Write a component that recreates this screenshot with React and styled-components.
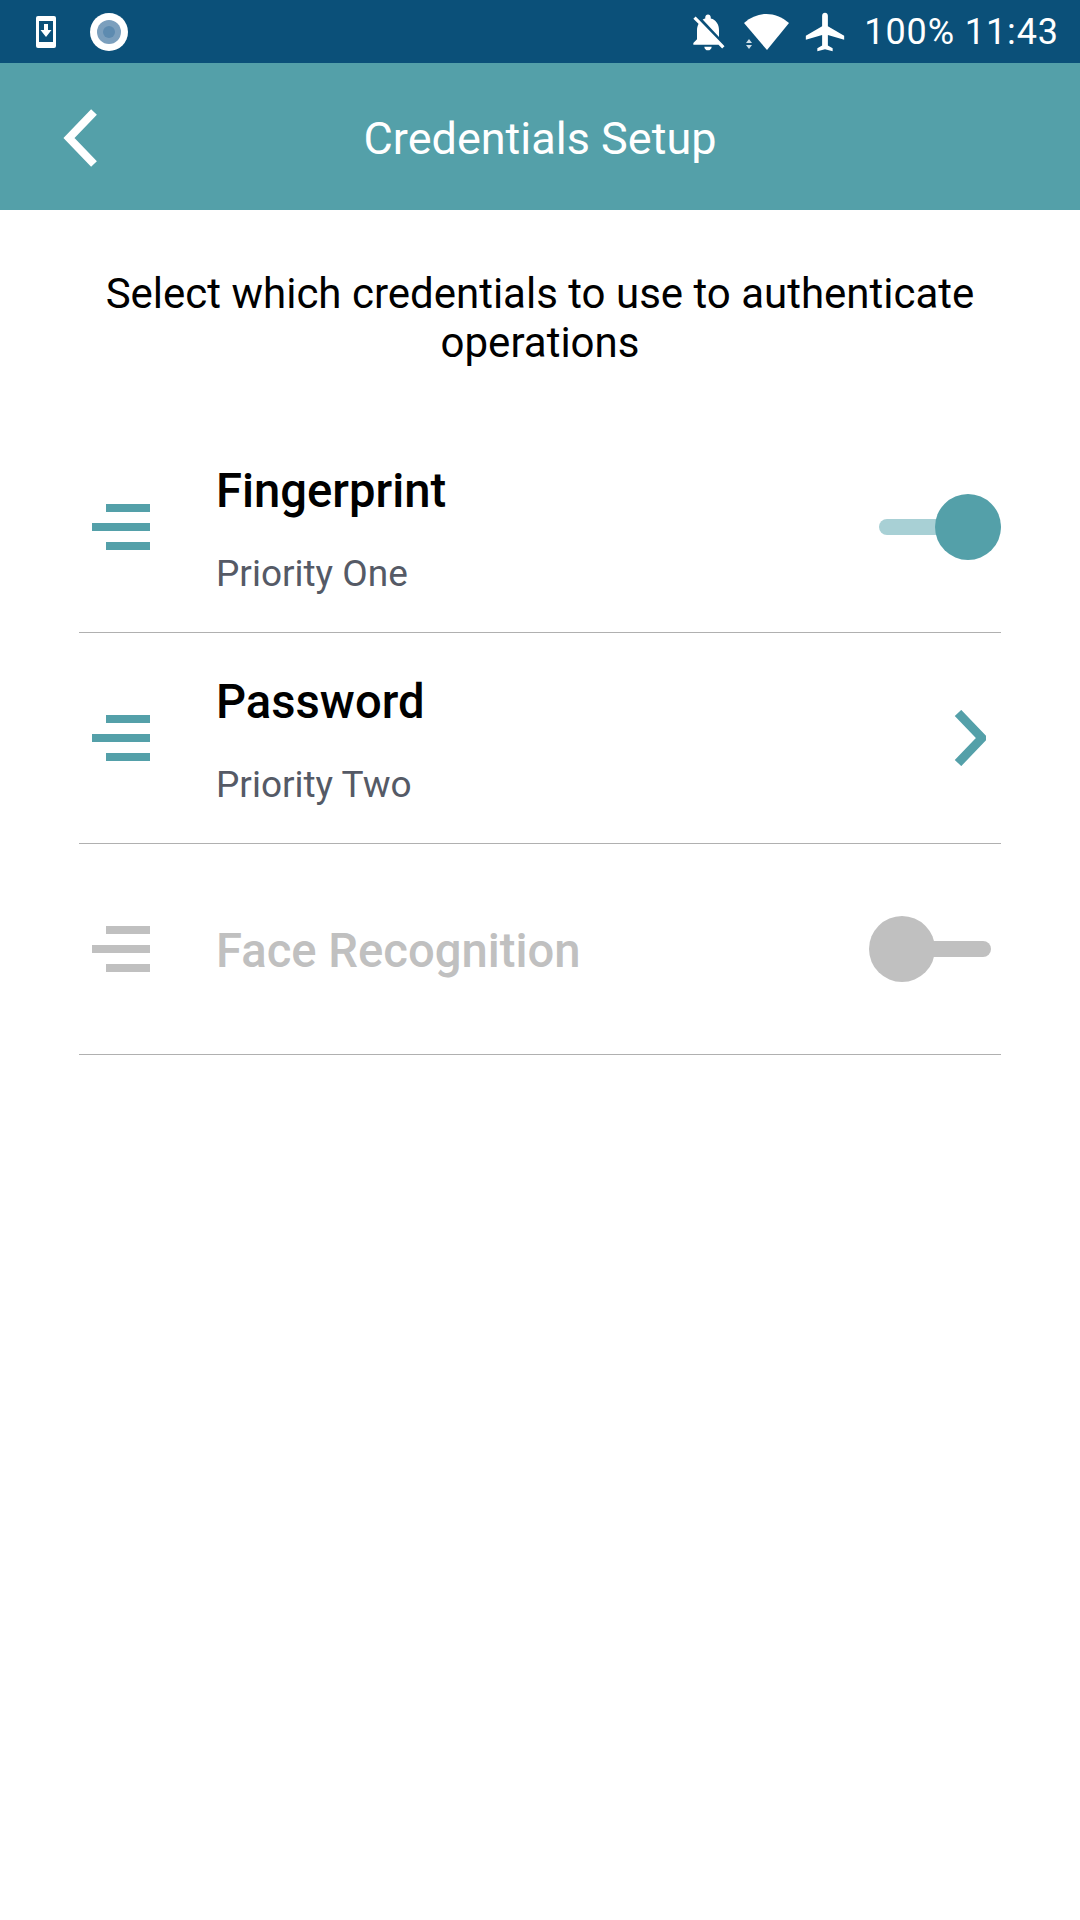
import React from "react";
import styled, { createGlobalStyle } from "styled-components";
import { MdNotificationsOff, MdAirplanemodeActive } from "react-icons/md";

const credentials = [
  { id: "fingerprint", title: "Fingerprint", priority: "Priority One", control: "on" },
  { id: "password", title: "Password", priority: "Priority Two", control: "chevron" },
  { id: "face", title: "Face Recognition", control: "off", disabled: true },
];

const App = () => {
  return (
    <Page>
      <GlobalStyle />
      <StatusBar>
        <StatusGroup>
          <PhoneIcon viewBox="0 0 20 32">
            <rect x="0" y="0" width="20" height="32" rx="2" fill="#fff" />
            <rect x="3" y="5" width="14" height="21" fill="#0b5079" />
            <path d="M8 8h4v6h3.500L10 21l-5.500-7H8z" fill="#fff" />
          </PhoneIcon>
          <RecordIcon viewBox="0 0 38 38">
            <circle cx="19" cy="19" r="19" fill="#fff" />
            <circle cx="19" cy="19" r="12" fill="#7b9fbd" />
            <circle cx="19" cy="19" r="6" fill="#5d8bb0" />
          </RecordIcon>
        </StatusGroup>
        <StatusGroup>
          <BellIcon />
          <WifiIcon viewBox="0 0 46 40">
            <path d="M0 11C14 -1 31 -1 45 11L23 38Z" fill="#fff" />
            <path d="M5 27l3 4H2zM2 33h6l-3 4z" fill="#cfe0ea" />
          </WifiIcon>
          <PlaneIcon />
          <StatusText>100% 11:43</StatusText>
        </StatusGroup>
      </StatusBar>
      <Header>
        <BackIcon viewBox="0 0 34 58">
          <path d="M31 3L6 29l25 26" />
        </BackIcon>
        <HeaderTitle>Credentials Setup</HeaderTitle>
      </Header>
      <Intro>Select which credentials to use to authenticate operations</Intro>
      <List>
        {credentials.map((item) => (
          <Row key={item.id}>
            <Handle>
              <HandleLine $disabled={item.disabled} />
              <HandleLine $disabled={item.disabled} $long />
              <HandleLine $disabled={item.disabled} />
            </Handle>
            <RowText>
              <RowTitle $disabled={item.disabled}>{item.title}</RowTitle>
              {item.priority && <RowPriority>{item.priority}</RowPriority>}
            </RowText>
            {item.control === "chevron" ? (
              <ChevronIcon viewBox="0 0 32 56">
                <path d="M4 3l24 25L4 53" />
              </ChevronIcon>
            ) : (
              <Toggle $on={item.control === "on"}>
                <Knob $on={item.control === "on"} />
              </Toggle>
            )}
          </Row>
        ))}
      </List>
    </Page>
  );
};

export default App;

const GlobalStyle = createGlobalStyle`
  html, body {
    margin: 0;
    padding: 0;
    background: #fff;
  }
  * {
    box-sizing: border-box;
  }
`;

const Page = styled.div`
  width: 1080px;
  height: 1920px;
  overflow: hidden;
  background: #fff;
  font-family: Roboto, "Liberation Sans", sans-serif;
`;

const StatusBar = styled.div`
  height: 63px;
  padding: 0 21px 0 36px;
  display: flex;
  align-items: center;
  justify-content: space-between;
  background: #0b5079;
  color: #fff;
`;

const StatusGroup = styled.div`
  display: flex;
  align-items: center;
`;

const PhoneIcon = styled.svg`
  width: 20px;
  height: 32px;
`;

const RecordIcon = styled.svg`
  width: 38px;
  height: 38px;
  margin-left: 34px;
`;

const BellIcon = styled(MdNotificationsOff)`
  width: 44px;
  height: 44px;
  color: #fff;
`;

const WifiIcon = styled.svg`
  width: 46px;
  height: 40px;
  margin-left: 14px;
`;

const PlaneIcon = styled(MdAirplanemodeActive)`
  width: 46px;
  height: 46px;
  margin-left: 12px;
  color: #fff;
`;

const StatusText = styled.span`
  margin-left: 16px;
  font-size: 36px;
  line-height: 40px;
  letter-spacing: 0.9px;
`;

const Header = styled.header`
  position: relative;
  height: 147px;
  display: flex;
  align-items: center;
  justify-content: center;
  padding-top: 4px;
  background: #54a0a9;
`;

const BackIcon = styled.svg`
  position: absolute;
  left: 63px;
  top: 46px;
  width: 34px;
  height: 58px;
  fill: none;
  stroke: #fff;
  stroke-width: 8;
`;

const HeaderTitle = styled.h1`
  margin: 0;
  font-size: 45px;
  font-weight: 400;
  line-height: 50px;
  color: #fff;
`;

const Intro = styled.p`
  margin: 0;
  padding: 59px 100px 0;
  height: 212px;
  font-size: 42px;
  line-height: 49px;
  text-align: center;
  color: #000;
`;

const List = styled.div`
  margin: 0 79px;
`;

const Row = styled.div`
  height: 211px;
  display: flex;
  align-items: center;
  border-bottom: 1px solid #b0b0b0;
`;

const Handle = styled.div`
  width: 58px;
  margin-left: 13px;
  display: flex;
  flex-direction: column;
  align-items: flex-end;
  gap: 11px;
`;

const HandleLine = styled.span`
  display: block;
  height: 8px;
  width: ${(props) => (props.$long ? "58px" : "44px")};
  background: ${(props) => (props.$disabled ? "#c0c0c0" : "#54a0a9")};
`;

const RowText = styled.div`
  flex: 1;
  margin-left: 66px;
`;

const RowTitle = styled.div`
  font-size: 47.200px;
  font-weight: 500;
  line-height: 54px;
  color: ${(props) => (props.$disabled ? "#c0c0c0" : "#000")};
  ${(props) => props.$disabled && "margin-top: 4px;"}
`;

const RowPriority = styled.div`
  margin: 35px 0 -5px;
  font-size: 37px;
  line-height: 42px;
  color: #555a66;
`;

const ChevronIcon = styled.svg`
  width: 32px;
  height: 56px;
  margin-right: 15px;
  fill: none;
  stroke: #54a0a9;
  stroke-width: 9;
`;

const Toggle = styled.div`
  position: relative;
  width: ${(props) => (props.$on ? "122px" : "112px")};
  height: 16px;
  margin-right: ${(props) => (props.$on ? "0" : "10px")};
  border-radius: 8px;
  background: ${(props) => (props.$on ? "#a8d0d5" : "#c0c0c0")};
`;

const Knob = styled.span`
  position: absolute;
  top: -25px;
  ${(props) => (props.$on ? "right: 0;" : "left: -10px;")}
  width: 66px;
  height: 66px;
  border-radius: 50%;
  background: ${(props) => (props.$on ? "#54a0a9" : "#c0c0c0")};
`;
